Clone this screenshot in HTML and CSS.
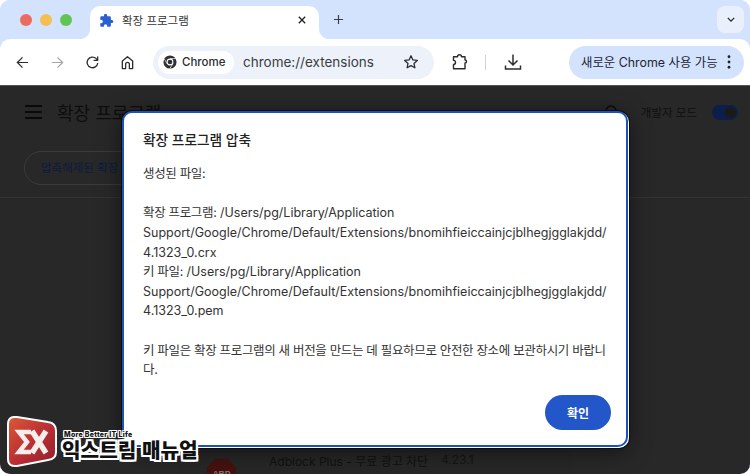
FILE: index.html
```html
<!DOCTYPE html>
<html lang="ko">
<head>
<meta charset="utf-8">
<title>확장 프로그램</title>
<link rel="stylesheet" href="styles.css">
</head>
<body>
<div class="window">
  <div class="tabstrip">
    <div class="traffic"><i class="dot red"></i><i class="dot yellow"></i><i class="dot green"></i></div>
    <div class="tab">
      <svg class="tab-icon" viewBox="0 0 24 24"><path fill="#2a5fd0" d="M20.5 11H19V7a2 2 0 0 0-2-2h-4V3.500a2.500 2.500 0 0 0-5 0V5H4a2 2 0 0 0-2 2v3.800h1.500a2.700 2.700 0 0 1 0 5.400H2V20a2 2 0 0 0 2 2h3.800v-1.500a2.700 2.700 0 0 1 5.400 0V22H17a2 2 0 0 0 2-2v-4h1.500a2.500 2.500 0 0 0 0-5z"/></svg>
      <span class="tab-title">확장 프로그램</span>
      <svg class="tab-close" viewBox="0 0 10 10"><path d="M1 1l8 8M9 1l-8 8" stroke="#1f1f1f" stroke-width="1.600" fill="none"/></svg>
    </div>
    <svg class="newtab" viewBox="0 0 12 12"><path d="M6 1v10M1 6h10" stroke="#3a3f47" stroke-width="1.300" fill="none"/></svg>
    <div class="strip-fill"></div>
    <div class="tabmenu"><svg viewBox="0 0 10 6" class="chev"><path d="M1 1l4 4 4-4" stroke="#1f1f1f" stroke-width="1.500" fill="none"/></svg></div>
  </div>
  <div class="toolbar">
    <svg class="tb back" viewBox="0 0 16 16"><path d="M14 8H2.500M8 2.500L2.500 8 8 13.500" stroke="#2b2d31" stroke-width="1.300" fill="none"/></svg>
    <svg class="tb forward" viewBox="0 0 16 16"><path d="M2 8h11.500M8 2.500L13.500 8 8 13.500" stroke="#a4a6aa" stroke-width="1.300" fill="none"/></svg>
    <svg class="tb reload" viewBox="0 0 16 16"><path d="M13.600 8.500A5.700 5.700 0 1 1 12 3.900L13.500 5.500M13.500 1.500V5.800H9.200" stroke="#2b2d31" stroke-width="1.400" fill="none"/></svg>
    <svg class="tb home" viewBox="0 0 16 16"><path d="M2.500 14.500V6.500L8 1.800l5.500 4.700v8H10V9.800a2 2 0 0 0-4 0v4.700z" stroke="#2b2d31" stroke-width="1.400" fill="none" stroke-linejoin="round"/></svg>
    <div class="omnibox">
      <div class="chip">
        <svg class="chrome-logo" viewBox="0 0 16 16"><circle cx="8" cy="8" r="7.500" fill="#2f3135"/><circle cx="8" cy="8" r="3.900" fill="#fff"/><circle cx="8" cy="8" r="2.700" fill="#2f3135"/><path d="M8 4.100h7M4.600 9.900L1.400 4.200M11.400 9.900L7.800 15.500" stroke="#fff" stroke-width="0.800"/></svg>
        <span>Chrome</span>
      </div>
      <span class="url">chrome://extensions</span>
      <svg class="star" viewBox="0 0 16 16"><path d="M8 1.800l1.900 4.100 4.400.5-3.300 3 .9 4.400L8 11.600l-3.900 2.200.9-4.400-3.300-3 4.400-.5z" stroke="#2b2d31" stroke-width="1.300" fill="none" stroke-linejoin="round"/></svg>
    </div>
    <svg class="tb ext" viewBox="0 0 18 18"><path d="M2.500 3.800H6.500a2 2 0 0 1 4 0H14V7a1.500 1.500 0 0 1 0 3v5.800H2.500V11.400a2 2 0 0 0 0-4z" stroke="#2b2d31" stroke-width="1.400" fill="none" stroke-linejoin="round"/></svg>
    <i class="sep"></i>
    <svg class="tb download" viewBox="0 0 18 18"><path d="M9 1.500v10M4.500 7.500L9 12l4.500-4.500M1.500 12.500v3.500h15v-3.500" stroke="#2b2d31" stroke-width="1.500" fill="none"/></svg>
    <div class="update">
      <span>새로운 Chrome 사용 가능</span>
      <svg class="kebab" viewBox="0 0 4 16"><circle cx="2" cy="2" r="1.600"/><circle cx="2" cy="8" r="1.600"/><circle cx="2" cy="14" r="1.600"/></svg>
    </div>
  </div>
  <div class="content">
    <div class="page-head">
      <div class="burger"><i></i><i></i><i></i></div>
      <span class="page-title">확장 프로그램</span>
      <div class="head-fill"></div>
      <svg class="search" viewBox="0 0 16 16"><circle cx="7" cy="7" r="5" stroke="#0b0b0b" stroke-width="1.500" fill="none"/></svg>
      <span class="dev">개발자 모드</span>
      <div class="toggle"><i></i></div>
    </div>
    <div class="actions"><div class="pill">압축해제된 확장</div></div>
    <div class="card-row">
      <svg class="abp" viewBox="0 0 36 36"><path d="M11 1h14l10 10v14L25 35H11L1 25V11z" fill="#43120f"/><text x="18" y="22" text-anchor="middle" class="abp-text">ABP</text></svg>
      <span class="abp-name">Adblock Plus - 무료 광고 차단</span>
      <span class="abp-ver">4.23.1</span>
    </div>
    <div class="dialog">
      <div class="dialog-title">확장 프로그램 압축</div>
      <div class="dialog-body"><span class="ko">생성된 파일:</span><br><br><span class="ko">확장 프로그램:</span> /Users/pg/Library/Application<br>Support/Google/Chrome/Default/Extensions/bnomihfieiccainjcjblhegjgglakjdd/<br>4.1323_0.crx<br><span class="ko">키 파일:</span> /Users/pg/Library/Application<br>Support/Google/Chrome/Default/Extensions/bnomihfieiccainjcjblhegjgglakjdd/<br>4.1323_0.pem<br><br><span class="ko">키 파일은 확장 프로그램의 새 버전을 만드는 데 필요하므로 안전한 장소에 보관하시기 바랍니</span><br><span class="ko">다.</span></div>
      <div class="dialog-foot"><button class="ok">확인</button></div>
    </div>
    <div class="brand">
      <svg class="brand-logo" viewBox="0 0 50 52">
        <defs><linearGradient id="g" x1="0" y1="0" x2="1" y2="1"><stop offset="0" stop-color="#dc5a35"/><stop offset="0.5" stop-color="#bc3035"/><stop offset="1" stop-color="#8f1d2a"/></linearGradient></defs>
        <path d="M10 1L41 6Q49 7 49 15V36Q49 43 41 44L10 50Q1 51 1 43V8Q1 0 10 1z" fill="url(#g)" stroke="#fff" stroke-width="2"/>
        <path d="M24 16H12L20 26 12 36H24" stroke="#f7eeec" stroke-width="4.500" fill="none"/>
        <path d="M25 15L39 37M39 15L25 37" stroke="#f7eeec" stroke-width="5.500" fill="none"/>
      </svg>
      <div class="brand-text">
        <div class="brand-small">More Better IT Life</div>
        <div class="brand-big">익스트림 매뉴얼</div>
      </div>
    </div>
  </div>
</div>
</body>
</html>
```

FILE: styles.css
```css
* { box-sizing: border-box; }
html, body { margin: 0; padding: 0; width: 750px; height: 474px; overflow: hidden; background: #fff; }
body { font-family: "Inter", "Noto Sans CJK KR", "Liberation Sans", sans-serif; }
.window { width: 750px; height: 474px; border-radius: 10px; overflow: hidden; display: flex; flex-direction: column; background: #d3e3fd; }
.tabstrip { height: 39px; background: #d3e3fd; display: flex; align-items: flex-end; flex: none; }
.traffic { display: flex; gap: 8px; width: 90px; padding: 0 0 13px 20px; flex: none; }
.dot { width: 12px; height: 12px; border-radius: 50%; display: block; }
.red { background: #ec6a5e; }
.yellow { background: #f4bf4f; }
.green { background: #61c554; }
.tab { width: 229px; height: 33px; background: #fff; border-radius: 10px 10px 0 0; display: flex; align-items: center; padding: 0 10px 5px 9px; flex: none; position: relative; }
.tab::before, .tab::after { content: ""; position: absolute; bottom: 0; width: 10px; height: 10px; }
.tab::before { left: -10px; background: radial-gradient(circle at 0 0, transparent 9.500px, #fff 10.500px); }
.tab::after { right: -10px; background: radial-gradient(circle at 100% 0, transparent 9.500px, #fff 10.500px); }
.tab-icon { width: 15px; height: 15px; flex: none; }
.tab-title { font-size: 11.500px; color: #333; margin-left: 8px; flex: 1; }
.tab-close { width: 8px; height: 8px; margin-right: 3px; flex: none; }
.newtab { width: 11px; height: 11px; margin: 0 0 14px 14px; flex: none; }
.strip-fill { flex: 1; }
.tabmenu { width: 27px; height: 27px; background: #e9f0fc; border-radius: 8px; margin: 0 6px 6px 0; display: flex; align-items: center; justify-content: center; flex: none; }
.chev { width: 8px; height: 5px; }
.toolbar { height: 46px; background: #fff; display: flex; align-items: center; flex: none; padding-left: 15px; border-radius: 10px 10px 0 0; }
.tb { width: 15px; height: 15px; flex: none; }
.forward { margin-left: 20px; }
.reload { margin-left: 20px; }
.home { margin-left: 20px; }
.omnibox { width: 281px; height: 33px; margin-left: 18px; border-radius: 17px; background: #edf2fa; display: flex; align-items: center; padding: 0 15px 0 5px; flex: none; }
.chip { height: 23px; width: 76px; background: #fff; border-radius: 12px; display: flex; align-items: center; padding-left: 5px; font-size: 11.500px; color: #2b2d31; font-weight: 500; flex: none; }
.chrome-logo { width: 14px; height: 14px; margin-right: 5px; flex: none; }
.url { font-size: 13.500px; color: #3a3c40; margin-left: 9px; flex: 1; white-space: nowrap; }
.star { width: 16px; height: 16px; flex: none; }
.ext { width: 18px; height: 18px; margin-left: 17px; }
.sep { width: 1px; height: 15px; background: #c7d3e8; margin-left: 16px; flex: none; }
.download { width: 18px; height: 18px; margin-left: 18px; }
.update { width: 175px; height: 33px; border-radius: 17px; background: #d3e3fd; display: flex; align-items: center; padding: 0 13px 0 12px; font-size: 12.400px; color: #1f2430; flex: none; white-space: nowrap; margin-left: 47px; }
.update span { flex: 1; }
.kebab { width: 4px; height: 14px; fill: #1f2430; flex: none; }
.content { flex: 1; background: #282828; position: relative; border-top: 1px solid #555; }
.page-head { height: 52px; display: flex; align-items: center; padding: 0 12px 0 25px; }
.burger { width: 17px; display: flex; flex-direction: column; gap: 4px; flex: none; }
.burger i { display: block; height: 2px; background: #0a0a0a; }
.page-title { font-size: 18px; color: #0e0e0e; margin-left: 15px; }
.head-fill { flex: 1; }
.search { width: 16px; height: 16px; flex: none; }
.dev { font-size: 11.500px; color: #0f0f0f; margin-left: 21px; }
.toggle { width: 26px; height: 15px; border-radius: 8px; background: #0c1f4a; margin-left: 15px; position: relative; flex: none; }
.toggle i { position: absolute; right: 2px; top: 2px; width: 11px; height: 11px; border-radius: 50%; background: #1a1a1a; }
.actions { height: 60px; border-bottom: 1px solid #333; padding: 13px 0 0 24px; }
.pill { width: 160px; height: 34px; border: 1px solid #3b3b3b; border-radius: 17px; font-size: 11.500px; color: #0c1b40; line-height: 32px; padding-left: 16px; white-space: nowrap; }
.card-row { position: absolute; left: 178px; top: 360px; width: 394px; height: 40px; background: #272727; }
.abp { position: absolute; left: 28px; top: 12px; width: 31px; height: 31px; }
.abp-text { font: 700 10px "Liberation Sans", sans-serif; fill: #8a6f6f; }
.abp-name { position: absolute; left: 91px; top: 6px; font-size: 12px; color: #111; white-space: nowrap; }
.abp-ver { position: absolute; left: 263px; top: 6px; font-size: 12px; color: #151515; white-space: nowrap; }
.dialog { position: absolute; left: 122px; top: 25px; width: 506px; height: 336px; background: #fff; border: 2px solid #1c53b8; border-radius: 10px; box-shadow: 1px 1px 0 #fff, 0 0 0 1px #0d0d0d, 1px 1px 0 1px #0d0d0d, 0 4px 22px rgba(0,0,0,.55); padding: 17px 19px 0; display: flex; flex-direction: column; }
.dialog-title { font-size: 13.700px; font-weight: 500; color: #222; line-height: 20px; }
.dialog-body { font-size: 12.500px; line-height: 19.640px; color: #333; margin-top: 14px; white-space: nowrap; flex: 1; }
.ko { letter-spacing: -0.33px; }
.dialog-foot { display: flex; justify-content: flex-end; padding: 0 0 15px; margin-right: -4px; }
.ok { width: 66px; height: 35px; border: none; border-radius: 18px; background: #2356c9; color: #fff; font: 600 12px "Inter", "Noto Sans CJK KR", sans-serif; }
.brand { position: absolute; left: 7px; top: 330px; display: flex; align-items: flex-start; }
.brand-logo { width: 50px; height: 52px; flex: none; }
.brand-text { margin: 14px 0 0 5px; }
.brand-small { font: 800 7px/9px "Inter", sans-serif; letter-spacing: 0.28px; color: #111; padding-left: 2px; white-space: nowrap; text-shadow: 1px 0 0 #fff, -1px 0 0 #fff, 0 1px 0 #fff, 0 -1px 0 #fff, 1px 1px 0 #fff, -1px -1px 0 #fff, 1px -1px 0 #fff, -1px 1px 0 #fff; }
.brand-big { font: 900 20.200px/22px "Noto Sans CJK KR", sans-serif; color: #111; text-shadow: 1px 1px 0 #fff, -1px -1px 0 #fff, 1px -1px 0 #fff, -1px 1px 0 #fff, 2px 0 0 #fff, -2px 0 0 #fff, 0 2px 0 #fff, 0 -2px 0 #fff, 2px 2px 0 #fff, -2px 2px 0 #fff, 2px -2px 0 #fff, -2px -2px 0 #fff; white-space: nowrap; }
```
